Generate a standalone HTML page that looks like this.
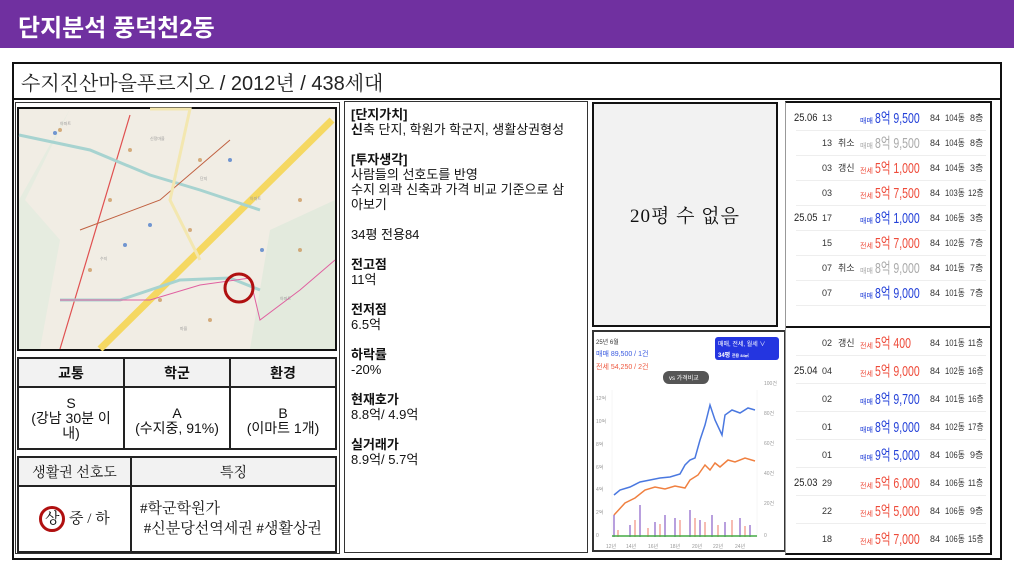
<!DOCTYPE html>
<html><head><meta charset="utf-8">
<style>
*{margin:0;padding:0;box-sizing:border-box}
body{width:1014px;height:570px;background:#fff;position:relative;overflow:hidden;font-family:"Liberation Sans","Noto Sans CJK KR",sans-serif;color:#111}
.abs{position:absolute}
#hdr{left:0;top:0;width:1014px;height:48px;background:#7030a0;color:#fff;font-size:24px;font-weight:bold;padding:8px 0 0 18px}
#outer{left:12px;top:62px;width:990px;height:498px;border:2px solid #111}
#title{left:12px;top:62px;width:990px;height:38px;border-bottom:2px solid #111;font-size:20px;padding:5px 0 0 9px;font-family:"Liberation Sans","Noto Serif CJK SC",serif;color:#222}
table{border-collapse:collapse}
.t1{left:17px;top:357px;width:320px}
.t1 td{border:2px solid #222;text-align:center;font-size:14px}
.hd{background:#f2f2f2;font-weight:bold;font-size:16px}
#mid{left:344px;top:101px;width:244px;height:452px;border:1px solid #333;padding:5px 6px;font-size:13px;line-height:15px}
#gray{left:592px;top:102px;width:186px;height:225px;border:2px solid #111;background:#f2f2f2;font-size:19px;display:flex;align-items:center;justify-content:center;font-family:"Liberation Serif","Noto Serif CJK SC",serif;letter-spacing:1px}
#chart{left:592px;top:330px;width:194px;height:222px;border:2px solid #333;background:#fff;overflow:hidden}
#trade{left:786px;top:102px;width:206px;height:452px}
.row{position:absolute;left:0;width:206px;height:25px;font-size:9px;color:#333;white-space:nowrap}
.row>span{position:absolute;top:0;line-height:25px;height:25px}
.row .ln{position:absolute;left:10px;right:6px;bottom:0;border-bottom:1px solid #eee}
.b{color:#2340d8}.r{color:#ee4b3a}.g{color:#aaa}
.p{font-size:15px;display:inline-block;transform:scaleX(.7);transform-origin:left center}
.k{font-size:7px}
.d{font-size:11px;color:#222;display:inline-block;transform:scaleX(.85);transform-origin:left center}
.dn{display:inline-block;transform:scaleX(.85);transform-origin:left center}
</style></head><body>
<div id="hdr" class="abs">단지분석 풍덕천2동</div>
<div id="outer" class="abs"></div>
<div id="title" class="abs">수지진산마을푸르지오 / 2012년 / 438세대</div>
<div class="abs" style="left:15px;top:102px;width:325px;height:452px;border:1px solid #333"></div>
<svg class="abs" style="left:17px;top:107px" width="320" height="244" viewBox="17 107 320 244">
<rect x="17" y="107" width="320" height="244" fill="#111"/>
<rect x="19" y="109" width="316" height="240" fill="#f1ede4"/>
<path d="M70 109 L25 200 L60 240 L40 349 L19 349 L19 200Z" fill="#e6ece0"/>
<path d="M270 230 L335 200 L335 349 L250 349 Z" fill="#e3eadd"/>
<path d="M100 349 L332 120" stroke="#f5d862" stroke-width="7"/>
<path d="M60 349 L130 115" stroke="#e05050" stroke-width="1.2"/>
<path d="M19 135 L90 150 L150 175 L200 190 L260 210" stroke="#a7d3d0" stroke-width="3" fill="none"/>
<path d="M60 300 L120 300 L180 280 L230 278 L260 290" stroke="#a7d3d0" stroke-width="3" fill="none"/>
<path d="M60 300 L150 300 L200 285 L250 278 L260 320 L300 290 L335 260" stroke="#e060a0" stroke-width="1" fill="none"/>
<path d="M80 230 L160 200 L230 140" stroke="#c06040" stroke-width="1" fill="none"/>
<path d="M150 109 L190 109 L170 200 L200 260" stroke="#f3e7b0" stroke-width="3" fill="none"/>
<g fill="#c89050" opacity=".7"><circle cx="60" cy="130" r="2"/><circle cx="130" cy="150" r="2"/><circle cx="200" cy="160" r="2"/><circle cx="110" cy="200" r="2"/><circle cx="190" cy="230" r="2"/><circle cx="90" cy="270" r="2"/><circle cx="160" cy="300" r="2"/><circle cx="300" cy="200" r="2"/><circle cx="300" cy="250" r="2"/><circle cx="210" cy="320" r="2"/></g>
<g fill="#3a70c8" opacity=".7"><circle cx="55" cy="133" r="2"/><circle cx="150" cy="225" r="2"/><circle cx="125" cy="245" r="2"/><circle cx="262" cy="250" r="2"/><circle cx="230" cy="160" r="2"/></g>
<g fill="#999" font-size="4"><text x="60" y="125">아파트</text><text x="150" y="140">신정마을</text><text x="200" y="180">단지</text><text x="100" y="260">수지</text><text x="250" y="200">아파트</text><text x="280" y="300">아파트</text><text x="180" y="330">마을</text></g>
<circle cx="239" cy="288" r="14" fill="none" stroke="#b01010" stroke-width="3"/>
</svg>
<table class="abs t1" style="height:93px">
<tr style="height:29px"><td class="hd" style="width:106px">교통</td><td class="hd" style="width:106px">학군</td><td class="hd">환경</td></tr>
<tr><td style="line-height:15px">S<br>(강남 30분 이<br>내)</td><td style="line-height:15px;padding-top:6px">A<br>(수지중, 91%)</td><td style="line-height:15px;padding-top:6px">B<br>(이마트 1개)</td></tr>
</table>
<table class="abs t1" style="top:456px;height:97px">
<tr style="height:29px"><td class="hd" style="width:113px;font-weight:normal;font-family:'Liberation Serif','Noto Serif CJK SC',serif">생활권 선호도</td><td class="hd" style="font-weight:normal;font-family:'Liberation Serif','Noto Serif CJK SC',serif">특징</td></tr>
<tr><td style="font-family:'Liberation Serif','Noto Serif CJK SC',serif;font-size:15px"><span style="display:inline-block;border:3px solid #b01010;border-radius:50%;width:26px;height:26px;line-height:20px">상</span> 중 / 하</td><td style="text-align:left;padding-left:8px;font-family:'Liberation Serif','Noto Serif CJK SC',serif;line-height:20px;font-size:15px">#학군학원가<br>&nbsp;#신분당선역세권 #생활상권</td></tr>
</table>
<div id="mid" class="abs">
<b>[단지가치]</b><br><b>신</b>축 단지, 학원가 학군지, 생활상권형성<br><br>
<b>[투자생각]</b><br>사람들의 선호도를 반영<br>수지 외곽 신축과 가격 비교 기준으로 삼<br>아보기<br><br>
34평 전용84<br><br>
<b>전고점</b><br>11억<br><br>
<b>전저점</b><br>6.5억<br><br>
<b>하락률</b><br>-20%<br><br>
<b>현재호가</b><br>8.8억/ 4.9억<br><br>
<b>실거래가</b><br>8.9억/ 5.7억
</div>
<div id="gray" class="abs">20평 수 없음</div>
<div id="chart" class="abs">
<svg width="194" height="222" viewBox="592 330 194 222" style="position:absolute;left:-2px;top:-2px">
<text x="596" y="344" font-size="6" fill="#333">25년 6월</text>
<text x="596" y="356" font-size="7" fill="#3a5be0">매매 89,500 / 1건</text>
<text x="596" y="369" font-size="7" fill="#ee5a40">전세 54,250 / 2건</text>
<rect x="715" y="337" width="64" height="23" rx="3" fill="#2435e0"/>
<text x="718" y="346" font-size="6" fill="#fff">매매, 전세, 월세 ∨</text>
<text x="718" y="357" font-size="6" fill="#fff" font-weight="bold">34평 <tspan font-size="4">전용 84㎡</tspan></text>
<rect x="663" y="371" width="46" height="13" rx="6" fill="#555"/>
<text x="669" y="380" font-size="6" fill="#fff">vs 가격비교</text>
<g font-size="5" fill="#999"><text x="596" y="400">12억</text><text x="596" y="423">10억</text><text x="596" y="446">8억</text><text x="596" y="469">6억</text><text x="596" y="491">4억</text><text x="596" y="514">2억</text><text x="596" y="537">0</text>
<text x="764" y="385">100건</text><text x="764" y="415">80건</text><text x="764" y="445">60건</text><text x="764" y="475">40건</text><text x="764" y="505">20건</text><text x="764" y="537">0</text>
<text x="606" y="548">12년</text><text x="626" y="548">14년</text><text x="648" y="548">16년</text><text x="670" y="548">18년</text><text x="692" y="548">20년</text><text x="713" y="548">22년</text><text x="735" y="548">24년</text></g>
<path d="M612 390 V537 M757 390 V537" stroke="#eee" stroke-width=".5"/>
<path d="M614 495 L620 490 L630 487 L640 482 L650 480 L660 478 L670 477 L680 474 L685 465 L690 460 L695 458 L700 440 L705 425 L710 405 L715 420 L722 435 L725 415 L732 410 L740 413 L748 408 L755 410" stroke="#4a78e0" stroke-width="1.5" fill="none"/>
<path d="M614 515 L625 503 L635 498 L645 490 L655 487 L665 489 L675 486 L685 488 L690 480 L698 475 L705 465 L710 470 L715 463 L720 467 L728 460 L735 462 L745 458 L755 461" stroke="#f08040" stroke-width="1.5" fill="none"/>
<g stroke-width="1.2"><path d="M614 537V515 M630 537V525 M640 537V505 M655 537V522 M665 537V515 M675 537V518 M690 537V510 M700 537V520 M712 537V515 M725 537V522 M740 537V518 M750 537V525" stroke="#8a60c8"/><path d="M618 537V530 M635 537V520 M648 537V528 M660 537V524 M680 537V520 M695 537V518 M705 537V522 M718 537V525 M732 537V520 M745 537V526" stroke="#f09080"/><path d="M612 536H757" stroke="#4a4" stroke-width="1.5"/></g>
</svg>
</div>
<div class="abs" style="left:785px;top:101px;width:207px;height:454px;border:2px solid #111;border-left:1px solid #999"></div>
<div id="trade" class="abs">
<div class="row" style="top:4px"><span style="left:8px" class="d">25.06</span><span style="left:36px">13</span><span style="left:74px" class="b"><span class="k">매매</span> <span class="p">8억 9,500</span></span><span style="left:144px">84</span><span style="left:159px" class="dn">104동</span><span style="left:184px">8층</span><div class="ln"></div></div>
<div class="row" style="top:29px"><span style="left:36px">13</span><span style="left:52px">취소</span><span style="left:74px" class="g"><span class="k">매매</span> <span class="p">8억 9,500</span></span><span style="left:144px">84</span><span style="left:159px" class="dn">104동</span><span style="left:184px">8층</span><div class="ln"></div></div>
<div class="row" style="top:54px"><span style="left:36px">03</span><span style="left:52px">갱신</span><span style="left:74px" class="r"><span class="k">전세</span> <span class="p">5억 1,000</span></span><span style="left:144px">84</span><span style="left:159px" class="dn">104동</span><span style="left:184px">3층</span><div class="ln"></div></div>
<div class="row" style="top:79px"><span style="left:36px">03</span><span style="left:74px" class="r"><span class="k">전세</span> <span class="p">5억 7,500</span></span><span style="left:144px">84</span><span style="left:159px" class="dn">103동</span><span style="left:182px" class="dn">12층</span><div class="ln"></div></div>
<div class="row" style="top:104px"><span style="left:8px" class="d">25.05</span><span style="left:36px">17</span><span style="left:74px" class="b"><span class="k">매매</span> <span class="p">8억 1,000</span></span><span style="left:144px">84</span><span style="left:159px" class="dn">106동</span><span style="left:184px">3층</span><div class="ln"></div></div>
<div class="row" style="top:129px"><span style="left:36px">15</span><span style="left:74px" class="r"><span class="k">전세</span> <span class="p">5억 7,000</span></span><span style="left:144px">84</span><span style="left:159px" class="dn">102동</span><span style="left:184px">7층</span><div class="ln"></div></div>
<div class="row" style="top:154px"><span style="left:36px">07</span><span style="left:52px">취소</span><span style="left:74px" class="g"><span class="k">매매</span> <span class="p">8억 9,000</span></span><span style="left:144px">84</span><span style="left:159px" class="dn">101동</span><span style="left:184px">7층</span><div class="ln"></div></div>
<div class="row" style="top:179px"><span style="left:36px">07</span><span style="left:74px" class="b"><span class="k">매매</span> <span class="p">8억 9,000</span></span><span style="left:144px">84</span><span style="left:159px" class="dn">101동</span><span style="left:184px">7층</span><div class="ln"></div></div>
<div class="abs" style="left:0;top:224px;width:206px;height:2px;background:#111"></div>
<div class="row" style="top:229px"><span style="left:36px">02</span><span style="left:52px">갱신</span><span style="left:74px" class="r"><span class="k">전세</span> <span class="p">5억 400</span></span><span style="left:144px">84</span><span style="left:159px" class="dn">101동</span><span style="left:182px" class="dn">11층</span><div class="ln"></div></div>
<div class="row" style="top:257px"><span style="left:8px" class="d">25.04</span><span style="left:36px">04</span><span style="left:74px" class="r"><span class="k">전세</span> <span class="p">5억 9,000</span></span><span style="left:144px">84</span><span style="left:159px" class="dn">102동</span><span style="left:182px" class="dn">16층</span><div class="ln"></div></div>
<div class="row" style="top:285px"><span style="left:36px">02</span><span style="left:74px" class="b"><span class="k">매매</span> <span class="p">8억 9,700</span></span><span style="left:144px">84</span><span style="left:159px" class="dn">101동</span><span style="left:182px" class="dn">16층</span><div class="ln"></div></div>
<div class="row" style="top:313px"><span style="left:36px">01</span><span style="left:74px" class="b"><span class="k">매매</span> <span class="p">8억 9,000</span></span><span style="left:144px">84</span><span style="left:159px" class="dn">102동</span><span style="left:182px" class="dn">17층</span><div class="ln"></div></div>
<div class="row" style="top:341px"><span style="left:36px">01</span><span style="left:74px" class="b"><span class="k">매매</span> <span class="p">9억 5,000</span></span><span style="left:144px">84</span><span style="left:159px" class="dn">106동</span><span style="left:184px">9층</span><div class="ln"></div></div>
<div class="row" style="top:369px"><span style="left:8px" class="d">25.03</span><span style="left:36px">29</span><span style="left:74px" class="r"><span class="k">전세</span> <span class="p">5억 6,000</span></span><span style="left:144px">84</span><span style="left:159px" class="dn">106동</span><span style="left:182px" class="dn">11층</span><div class="ln"></div></div>
<div class="row" style="top:397px"><span style="left:36px">22</span><span style="left:74px" class="r"><span class="k">전세</span> <span class="p">5억 5,000</span></span><span style="left:144px">84</span><span style="left:159px" class="dn">106동</span><span style="left:184px">9층</span><div class="ln"></div></div>
<div class="row" style="top:425px"><span style="left:36px">18</span><span style="left:74px" class="r"><span class="k">전세</span> <span class="p">5억 7,000</span></span><span style="left:144px">84</span><span style="left:159px" class="dn">106동</span><span style="left:182px" class="dn">15층</span></div>
</div>
</body></html>
